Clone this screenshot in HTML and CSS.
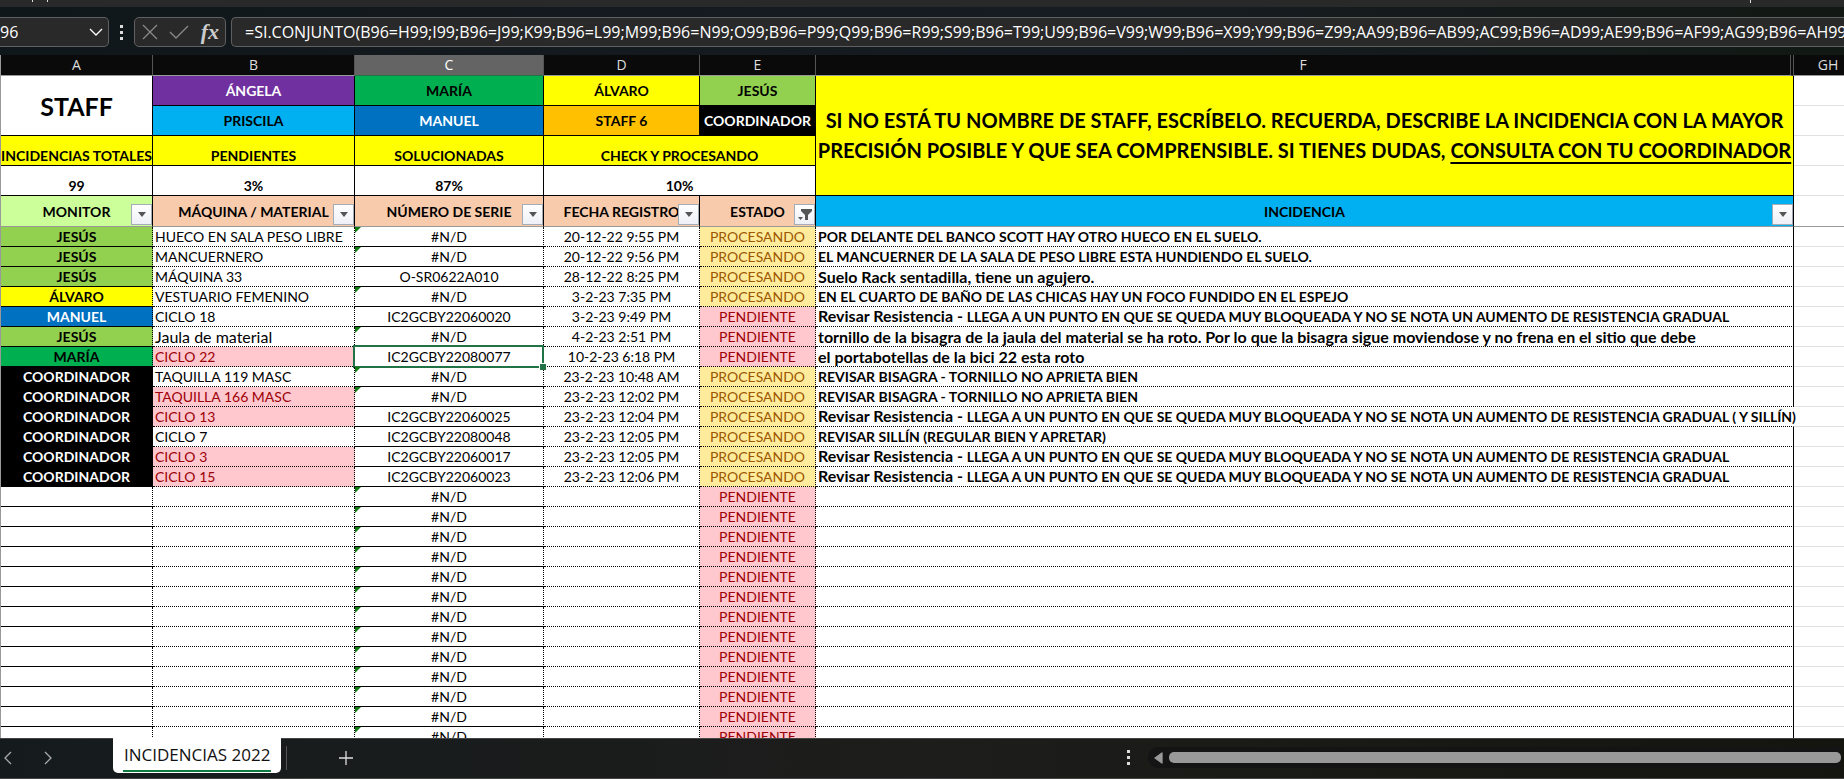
FILE: index.html
```html
<!DOCTYPE html>
<html lang="es">
<head>
<meta charset="utf-8">
<title>Incidencias 2022</title>
<link rel="stylesheet" href="styles.css">
</head>
<body>
<div class="ribbon"><i></i><i></i><i class="last"></i></div>
<div class="formula-bar">
  <div class="name-box">
    <input class="name-input" aria-label="Cuadro de nombres" value="96">
    <button class="plain" aria-label="Abrir nombres"><svg width="14" height="8" viewBox="0 0 14 8"><path d="M1 1l6 6 6-6"/></svg></button>
  </div>
  <span class="dots"><i></i><i></i><i></i></span>
  <div class="fx-box">
    <button class="plain dim" aria-label="Cancelar"><svg width="16" height="16" viewBox="0 0 16 16"><path d="M1 1l14 14M15 1L1 15"/></svg></button>
    <button class="plain dim" aria-label="Introducir"><svg width="20" height="14" viewBox="0 0 20 14"><path d="M1 7l6 6L19 1"/></svg></button>
    <button class="plain fx" aria-label="Insertar función"><em>fx</em></button>
  </div>
  <input class="formula" aria-label="Barra de fórmulas" value="=SI.CONJUNTO(B96=H99;I99;B96=J99;K99;B96=L99;M99;B96=N99;O99;B96=P99;Q99;B96=R99;S99;B96=T99;U99;B96=V99;W99;B96=X99;Y99;B96=Z99;AA99;B96=AB99;AC99;B96=AD99;AE99;B96=AF99;AG99;B96=AH99;AI99)">
</div>
<main class="sheet">
<table>
<colgroup><col class="ca"><col class="cb"><col class="cc"><col class="cd"><col class="ce"><col><col class="cg"></colgroup>
<thead>
<tr class="letters"><th>A</th><th>B</th><th class="active">C</th><th>D</th><th>E</th><th class="double">F</th><th class="rest">GH</th></tr>
<tr class="top"><th rowspan="2" class="staff">STAFF</th><th class="purple">ÁNGELA</th><th class="green">MARÍA</th><th class="yellow">ÁLVARO</th><th class="lime">JESÚS</th><th rowspan="4" class="yellow banner">SI NO ESTÁ TU NOMBRE DE STAFF, ESCRÍBELO. RECUERDA, DESCRIBE LA INCIDENCIA CON LA MAYOR<br>PRECISIÓN POSIBLE Y QUE SEA COMPRENSIBLE. SI TIENES DUDAS, <u>CONSULTA CON TU COORDINADOR</u></th><td class="rest"></td></tr>
<tr class="top"><th class="sky">PRISCILA</th><th class="blue">MANUEL</th><th class="orange">STAFF 6</th><th class="black">COORDINADOR</th><td class="rest"></td></tr>
<tr class="top low"><th class="yellow">INCIDENCIAS TOTALES</th><th class="yellow">PENDIENTES</th><th class="yellow">SOLUCIONADAS</th><th colspan="2" class="yellow">CHECK Y PROCESANDO</th><td class="rest"></td></tr>
<tr class="top low"><th>99</th><th>3%</th><th>87%</th><th colspan="2">10%</th><td class="rest"></td></tr>
<tr class="titles">
<th class="mint">MONITOR<button class="filter" aria-label="Filtrar monitor"><svg width="8" height="5" viewBox="0 0 8 5"><path d="M0 0h8L4 5z"/></svg></button></th>
<th class="peach">MÁQUINA / MATERIAL<button class="filter" aria-label="Filtrar máquina"><svg width="8" height="5" viewBox="0 0 8 5"><path d="M0 0h8L4 5z"/></svg></button></th>
<th class="peach">NÚMERO DE SERIE<button class="filter" aria-label="Filtrar serie"><svg width="8" height="5" viewBox="0 0 8 5"><path d="M0 0h8L4 5z"/></svg></button></th>
<th class="peach">FECHA REGISTRO<button class="filter" aria-label="Filtrar fecha"><svg width="8" height="5" viewBox="0 0 8 5"><path d="M0 0h8L4 5z"/></svg></button></th>
<th class="peach">ESTADO<button class="filter" aria-label="Filtrar estado"><svg width="14" height="12" viewBox="0 0 14 12"><path d="M3 0h11v2l-4 4v5H7V6L3 2zM0 8h5L2.500 11z"/></svg></button></th>
<th class="sky">INCIDENCIA<button class="filter" aria-label="Filtrar incidencia"><svg width="8" height="5" viewBox="0 0 8 5"><path d="M0 0h8L4 5z"/></svg></button></th>
<td class="rest"></td></tr>
</thead>
<tbody>
<tr><td class="lime">JESÚS</td><td>HUECO EN SALA PESO LIBRE</td><td class="err">#N/D</td><td>20-12-22 9:55 PM</td><td class="proc">PROCESANDO</td><td>POR DELANTE DEL BANCO SCOTT HAY OTRO HUECO EN EL SUELO.</td><td></td></tr>
<tr><td class="lime">JESÚS</td><td>MANCUERNERO</td><td class="err">#N/D</td><td>20-12-22 9:56 PM</td><td class="proc">PROCESANDO</td><td>EL MANCUERNER DE LA SALA DE PESO LIBRE ESTA HUNDIENDO EL SUELO.</td><td></td></tr>
<tr><td class="lime">JESÚS</td><td>MÁQUINA 33</td><td>O-SR0622A010</td><td>28-12-22 8:25 PM</td><td class="proc">PROCESANDO</td><td class="prose">Suelo Rack sentadilla, tiene un agujero.</td><td></td></tr>
<tr><td class="yellow">ÁLVARO</td><td>VESTUARIO FEMENINO</td><td class="err">#N/D</td><td>3-2-23 7:35 PM</td><td class="proc">PROCESANDO</td><td>EN EL CUARTO DE BAÑO DE LAS CHICAS HAY UN FOCO FUNDIDO EN EL ESPEJO</td><td></td></tr>
<tr><td class="blue">MANUEL</td><td>CICLO 18</td><td>IC2GCBY22060020</td><td>3-2-23 9:49 PM</td><td class="pend">PENDIENTE</td><td><span class="prose">Revisar Resistencia - </span>LLEGA A UN PUNTO EN QUE SE QUEDA MUY BLOQUEADA Y NO SE NOTA UN AUMENTO DE RESISTENCIA GRADUAL</td><td></td></tr>
<tr><td class="lime">JESÚS</td><td class="prose">Jaula de material</td><td class="err">#N/D</td><td>4-2-23 2:51 PM</td><td class="pend">PENDIENTE</td><td class="prose">tornillo de la bisagra de la jaula del material se ha roto. Por lo que la bisagra sigue moviendose y no frena en el sitio que debe</td><td></td></tr>
<tr><td class="green">MARÍA</td><td class="pend">CICLO 22</td><td class="selected">IC2GCBY22080077</td><td>10-2-23 6:18 PM</td><td class="pend">PENDIENTE</td><td class="prose">el portabotellas de la bici 22 esta roto</td><td></td></tr>
<tr><td class="black">COORDINADOR</td><td>TAQUILLA 119 MASC</td><td class="err">#N/D</td><td>23-2-23 10:48 AM</td><td class="proc">PROCESANDO</td><td>REVISAR BISAGRA - TORNILLO NO APRIETA BIEN</td><td></td></tr>
<tr><td class="black">COORDINADOR</td><td class="pend">TAQUILLA 166 MASC</td><td class="err">#N/D</td><td>23-2-23 12:02 PM</td><td class="proc">PROCESANDO</td><td>REVISAR BISAGRA - TORNILLO NO APRIETA BIEN</td><td></td></tr>
<tr><td class="black">COORDINADOR</td><td class="pend">CICLO 13</td><td>IC2GCBY22060025</td><td>23-2-23 12:04 PM</td><td class="proc">PROCESANDO</td><td class="spill"><span class="prose">Revisar Resistencia - </span>LLEGA A UN PUNTO EN QUE SE QUEDA MUY BLOQUEADA Y NO SE NOTA UN AUMENTO DE RESISTENCIA GRADUAL ( Y SILLÍN)</td><td></td></tr>
<tr><td class="black">COORDINADOR</td><td>CICLO 7</td><td>IC2GCBY22080048</td><td>23-2-23 12:05 PM</td><td class="proc">PROCESANDO</td><td>REVISAR SILLÍN (REGULAR BIEN Y APRETAR)</td><td></td></tr>
<tr><td class="black">COORDINADOR</td><td class="pend">CICLO 3</td><td>IC2GCBY22060017</td><td>23-2-23 12:05 PM</td><td class="proc">PROCESANDO</td><td><span class="prose">Revisar Resistencia - </span>LLEGA A UN PUNTO EN QUE SE QUEDA MUY BLOQUEADA Y NO SE NOTA UN AUMENTO DE RESISTENCIA GRADUAL</td><td></td></tr>
<tr><td class="black">COORDINADOR</td><td class="pend">CICLO 15</td><td>IC2GCBY22060023</td><td>23-2-23 12:06 PM</td><td class="proc">PROCESANDO</td><td><span class="prose">Revisar Resistencia - </span>LLEGA A UN PUNTO EN QUE SE QUEDA MUY BLOQUEADA Y NO SE NOTA UN AUMENTO DE RESISTENCIA GRADUAL</td><td></td></tr>
<tr><td></td><td></td><td class="err">#N/D</td><td></td><td class="pend">PENDIENTE</td><td></td><td></td></tr>
<tr><td></td><td></td><td class="err">#N/D</td><td></td><td class="pend">PENDIENTE</td><td></td><td></td></tr>
<tr><td></td><td></td><td class="err">#N/D</td><td></td><td class="pend">PENDIENTE</td><td></td><td></td></tr>
<tr><td></td><td></td><td class="err">#N/D</td><td></td><td class="pend">PENDIENTE</td><td></td><td></td></tr>
<tr><td></td><td></td><td class="err">#N/D</td><td></td><td class="pend">PENDIENTE</td><td></td><td></td></tr>
<tr><td></td><td></td><td class="err">#N/D</td><td></td><td class="pend">PENDIENTE</td><td></td><td></td></tr>
<tr><td></td><td></td><td class="err">#N/D</td><td></td><td class="pend">PENDIENTE</td><td></td><td></td></tr>
<tr><td></td><td></td><td class="err">#N/D</td><td></td><td class="pend">PENDIENTE</td><td></td><td></td></tr>
<tr><td></td><td></td><td class="err">#N/D</td><td></td><td class="pend">PENDIENTE</td><td></td><td></td></tr>
<tr><td></td><td></td><td class="err">#N/D</td><td></td><td class="pend">PENDIENTE</td><td></td><td></td></tr>
<tr><td></td><td></td><td class="err">#N/D</td><td></td><td class="pend">PENDIENTE</td><td></td><td></td></tr>
<tr><td></td><td></td><td class="err">#N/D</td><td></td><td class="pend">PENDIENTE</td><td></td><td></td></tr>
<tr><td></td><td></td><td class="err">#N/D</td><td></td><td class="pend">PENDIENTE</td><td></td><td></td></tr>
</tbody>
</table>
</main>
<footer class="tabs">
  <button class="plain nav" aria-label="Hoja anterior"><svg width="8" height="14" viewBox="0 0 8 14"><path d="M7 1L1 7l6 6"/></svg></button>
  <button class="plain nav" aria-label="Hoja siguiente"><svg width="8" height="14" viewBox="0 0 8 14"><path d="M1 1l6 6-6 6"/></svg></button>
  <button class="tab"><span>INCIDENCIAS 2022</span></button>
  <button class="plain add" aria-label="Nueva hoja"><svg width="16" height="16" viewBox="0 0 16 16"><path d="M8 1v14M1 8h14"/></svg></button>
  <span class="dots"><i></i><i></i><i></i></span>
  <div class="scroll">
    <button class="plain arrow" aria-label="Desplazar a la izquierda"><svg width="9" height="12" viewBox="0 0 9 12"><path d="M8 1v10L1 6z"/></svg></button>
    <div class="thumb"></div>
  </div>
</footer>
</body>
</html>
```
FILE: styles.css
```css
* { box-sizing: border-box; }
body {
  margin: 0;
  height: 100vh;
  display: flex;
  flex-direction: column;
  overflow: hidden;
  background: #14191c;
  color: #000;
  font-family: Lato, "Open Sans", sans-serif;
  font-size: 14px;
}
button, input { font: inherit; color: inherit; margin: 0; }
svg { display: block; }
.plain {
  display: flex;
  align-items: center;
  justify-content: center;
  padding: 0;
  border: 0;
  background: none;
}
.plain svg { fill: none; stroke: currentColor; stroke-width: 1.3; }

.ribbon {
  display: flex;
  flex: none;
  gap: 14px;
  height: 7px;
  padding: 0 93px 0 32px;
  background: #292929;
}
.ribbon i { width: 1px; height: 2px; background: #ddd; }
.ribbon .last { margin-left: auto; height: 3px; }

.formula-bar {
  display: flex;
  flex: none;
  align-items: center;
  height: 48px;
  padding-top: 2px;
  background: linear-gradient(90deg, #10171a, #171c22 60%, #121914);
  color: #fff;
  font-family: "Open Sans", sans-serif;
  font-size: 16px;
}
.name-box, .fx-box, .formula {
  height: 30px;
  border: 1px solid #606060;
  background: #292929;
}
.name-box {
  display: flex;
  align-items: center;
  width: 109px;
  border-left: 0;
  border-radius: 0 5px 5px 0;
  padding-right: 5px;
}
.name-input {
  flex: 1;
  min-width: 0;
  padding: 0;
  border: 0;
  background: none;
}
.dots { display: flex; flex-direction: column; gap: 3px; }
.dots i { width: 3px; height: 3px; background: #ddd; }
.formula-bar .dots { margin: 0 11px; }
.fx-box {
  display: flex;
  align-items: center;
  justify-content: space-between;
  width: 92px;
  padding: 0 6px 0 7px;
  border-radius: 5px;
}
.dim { color: #8a8a8a; }
.fx { color: #ccc; font-family: "Liberation Serif", serif; font-size: 22px; font-weight: 700; line-height: 24px; }
.formula {
  flex: 1;
  min-width: 0;
  margin-left: 5px;
  padding: 0 0 0 13px;
  border-right: 0;
  border-radius: 5px 0 0 5px;
}

.sheet {
  flex: 1;
  min-height: 0;
  overflow: hidden;
  border-left: 1px solid #999;
  background: #fff;
}
table {
  width: 100%;
  table-layout: fixed;
  border-collapse: separate;
  border-spacing: 0;
}
.ca { width: 152px; }
.cb { width: 202px; }
.cc { width: 189px; }
.cd { width: 156px; }
.ce { width: 116px; }
.cg { width: 50px; }
th, td {
  position: relative;
  height: 20px;
  padding: 1px 0 0;
  border: solid #000;
  border-width: 0 1px 1px 0;
  line-height: 18px;
  text-align: center;
  white-space: nowrap;
}
.letters th {
  height: 21px;
  padding: 0;
  border-color: #999 #555;
  background: #0a0a0a;
  color: #ddd;
  font: 14px/20px "Open Sans", sans-serif;
}
.letters .active {
  border-bottom-color: #217346;
  background: #646464;
  color: #fff;
}
.letters .double { border-right: 4px double #555; }
.letters .rest { border-right: 0; padding-left: 18px; }
.top th, .top td { height: 30px; }
.low th { vertical-align: bottom; }
.top .staff { font-size: 25px; }
.top .banner { padding: 0 0 2px; font-size: 20px; line-height: 30px; }
.banner u { text-underline-offset: 4px; text-decoration-thickness: 2px; }
.top .rest { border-right: 0; border-bottom-color: #e0e0e0; }
.titles th, .titles td { height: 31px; border-bottom-color: #999; }
.titles .rest { border-right: 0; }
.filter {
  position: absolute;
  right: 0;
  bottom: 1px;
  display: flex;
  align-items: center;
  justify-content: center;
  width: 21px;
  height: 21px;
  padding: 0;
  border: 1px solid #a3adb8;
  background: linear-gradient(#fff, #edf0f6);
}
.filter svg { fill: #555; }

tbody td { border-style: dotted; }
tbody td:nth-child(1) { border-bottom-style: solid; font-weight: 700; }
tbody td:nth-child(2) { padding-left: 2px; text-align: left; }
tbody td:nth-child(3) { border-bottom-style: solid; }
tbody td:nth-child(6) {
  padding-left: 2px;
  border-right-style: solid;
  font-weight: 700;
  text-align: left;
}
tbody .prose { font-size: 16px; }
tbody span.prose { line-height: 1; }
tbody td.spill { border-right-color: transparent; }
tbody td:nth-child(7) { border-style: solid; border-right: 0; border-color: #e0e0e0; }
.err::before {
  content: "";
  position: absolute;
  left: 0;
  top: 0;
  width: 6px;
  height: 6px;
  background: #107c10;
  clip-path: polygon(0 0, 100% 0, 0 100%);
}
.selected::before {
  content: "";
  position: absolute;
  inset: -2px -1px -2px -2px;
  border: 2px solid #217346;
}
.selected::after {
  content: "";
  position: absolute;
  right: -3px;
  bottom: -4px;
  z-index: 1;
  width: 6px;
  height: 6px;
  border: solid #fff;
  border-width: 1px 0 0 1px;
  background: #217346;
}
.purple { background: #7030a0; color: #fff; }
.green { background: #00b050; }
.yellow { background: #ff0; }
.lime { background: #92d050; }
.sky { background: #00b0f0; }
.blue { background: #0070c0; color: #fff; }
.orange { background: #ffc000; }
.black { background: #000; color: #fff; }
.mint { background: #cf9; }
.peach { background: #f8cbad; }
.proc { background: #ffeb9c; color: #9c5700; }
.pend { background: #ffc7ce; color: #9c0006; }

.tabs {
  display: flex;
  flex: none;
  align-items: center;
  height: 41px;
  padding: 0 3px 2px 4px;
  border: solid #444;
  border-width: 1px 0;
  background: linear-gradient(90deg, #151b1d, #1d1d1b 50%, #14150f);
  color: #ddd;
}
.nav { width: 8px; margin-right: 32px; color: #aaa; }
.tab {
  align-self: flex-start;
  height: 35px;
  margin: -1px 0 0 29px;
  padding: 0 10px;
  border: 0;
  border-radius: 0 0 5px 5px;
  background: #fff;
  color: #111;
  font: 500 17px/30px "Open Sans", sans-serif;
}
.tab span { display: block; height: 32px; padding: 0 1px; border-bottom: 2px solid #107c41; }
.add { margin-left: 5px; padding-left: 51px; height: 24px; border-left: 1px solid #555; }
.tabs .dots { margin-left: auto; }
.scroll {
  display: flex;
  align-items: center;
  gap: 6px;
  width: 37.7%;
  height: 21px;
  margin-left: 18px;
  padding-left: 6px;
  border-radius: 10px 0 0 10px;
  background: #141414;
}
.arrow svg { fill: #999; stroke: #999; stroke-linejoin: round; }
.thumb { flex: 1; height: 11px; border-radius: 5px; background: #999; }
```
